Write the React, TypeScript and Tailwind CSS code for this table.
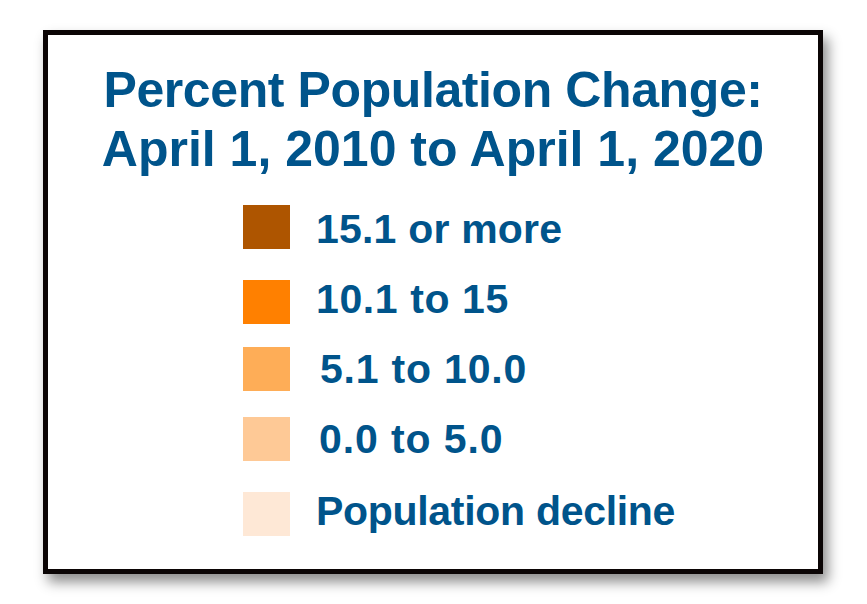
import React from "react";

const rows = [
  { color: "bg-[#ae5500]", label: "15.1 or more", mt: "mt-0", ml: "ml-[26px] mt-[2px] tracking-[0.2px]" },
  { color: "bg-[#ff8000]", label: "10.1 to 15", mt: "mt-[31px]", ml: "ml-[26px] -mt-[3px] tracking-[0.6px]" },
  { color: "bg-[#fead57]", label: "5.1 to 10.0", mt: "mt-[23px]", ml: "ml-[30px] tracking-[0.8px]" },
  { color: "bg-[#fec996]", label: "0.0 to 5.0", mt: "mt-[26px]", ml: "ml-[29px] tracking-[0.9px]" },
  { color: "bg-[#fee8d6]", label: "Population decline", mt: "mt-[31px]", ml: "ml-[26px] -mt-[3px] tracking-[-0.3px]" },
];

export default function App() {
  return (
    <div className="w-[867px] h-[604px] bg-white pt-[30px] pl-[43px]" style={{ fontFamily: '"Liberation Sans", Arial, sans-serif' }}>
      <div className="w-[780px] h-[544px] border-[5px] border-[#0b0505] bg-white shadow-[5px_8px_12px_rgba(0,0,0,0.45)] flex flex-col">
        <div className="pt-[26px] text-center text-[50px] leading-[59px] font-bold text-[#00548b]">
          <div className="tracking-[-0.4px]">Percent Population Change:</div>
          <div>April 1, 2010 to April 1, 2020</div>
        </div>
        <div className="mt-[26px] pl-[195px] flex flex-col">
          {rows.map((r) => (
            <div key={r.label} className={`flex items-start h-[44px] ${r.mt}`}>
              <div className={`w-[47px] h-[44px] shrink-0 ${r.color}`} />
              <div className={`${r.ml} text-[41px] leading-[44px] font-bold text-[#00548b] whitespace-nowrap`}>{r.label}</div>
            </div>
          ))}
        </div>
      </div>
    </div>
  );
}
